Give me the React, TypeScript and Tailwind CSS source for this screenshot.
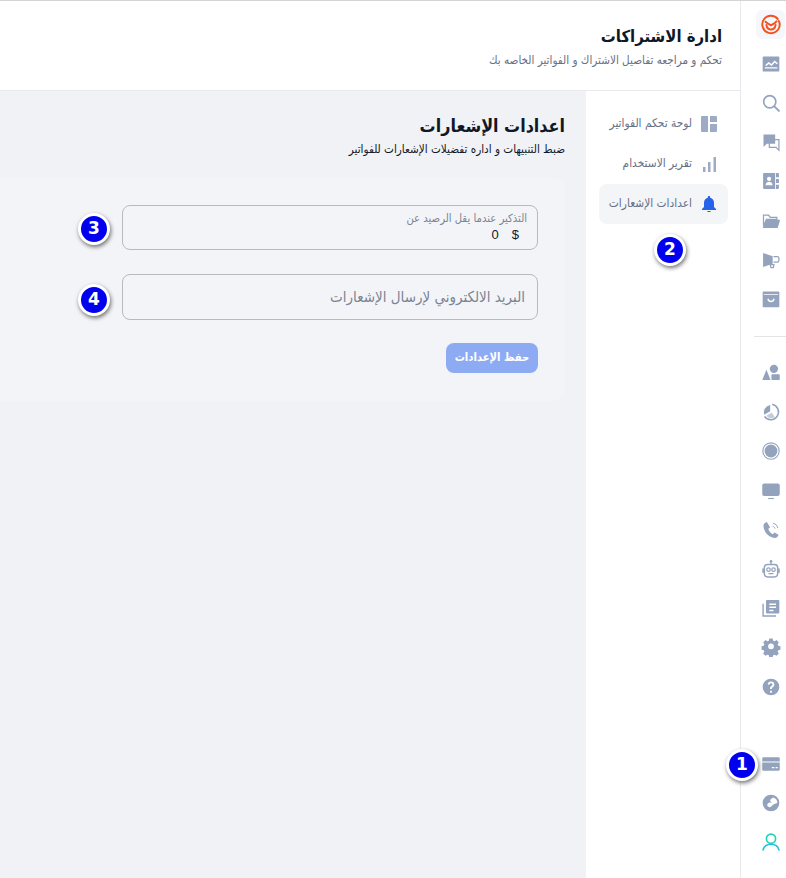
import type { ReactNode } from 'react';

const FONT = "font-['DejaVu_Sans_Condensed','DejaVu_Sans',sans-serif]";

function Svg({ children, className = 'text-[#94a3bd]' }: { children: ReactNode; className?: string }) {
  return (
    <svg viewBox="0 0 24 24" width="20" height="20" fill="currentColor" className={className}>
      {children}
    </svg>
  );
}

const topIcons: ReactNode[] = [
  <Svg>
    <path fillRule="evenodd" d="M3 3h18a1 1 0 0 1 1 1v16a1 1 0 0 1-1 1H3a1 1 0 0 1-1-1V4a1 1 0 0 1 1-1Zm1.500 13v1.500h15V16H4.500Zm.4-2.500 4.300-4 3.300 2.500 3.800-4.300 3.900 3.300-1.200 1.400-2.500-2.100-3.700 4.200-3.500-2.600-2.800 2.600Z" />
  </Svg>,
  <Svg>
    <circle cx="10.500" cy="10.500" r="7.300" fill="none" stroke="currentColor" strokeWidth="2" />
    <path d="m16 16 5.500 5.500" stroke="currentColor" strokeWidth="2.400" strokeLinecap="round" />
  </Svg>,
  <Svg>
    <path d="M10 9h11.500v13l-3.500-3.500h-8Z" fill="none" stroke="currentColor" strokeWidth="1.500" />
    <path d="M3 3h14v11H7l-4 4Z" />
  </Svg>,
  <Svg>
    <path fillRule="evenodd" d="M3.500 2.500H17v19H3.500A1 1 0 0 1 2.500 20.500V3.500a1 1 0 0 1 1-1ZM9.700 7a2.500 2.500 0 1 0 0 5 2.500 2.500 0 0 0 0-5Zm-4.200 10h8.400c0-2.200-1.900-4-4.200-4s-4.200 1.800-4.200 4Z" />
    <path d="M18 2.500h2.500a1 1 0 0 1 1 1v4H18Zm0 7h3.500v5H18Zm0 7h3.500v4a1 1 0 0 1-1 1H18Z" />
  </Svg>,
  <Svg>
    <path d="M3 5h6l2 2.500h8V10H6.500L3 18Z" fill="none" stroke="currentColor" strokeWidth="1.500" />
    <path d="M6.500 10.500H23L20 20.500H2Z" />
  </Svg>,
  <Svg>
    <path d="M2.500 3.500 14 7.500v9l-11.500 4Z" />
    <path d="M15 8h4.500a2 2 0 0 1 2 2v2.500a2 2 0 0 1-2 2H15" fill="none" stroke="currentColor" strokeWidth="1.500" />
    <path d="M11 17.500h4.500l-.7 3.500H12Z" fill="none" stroke="currentColor" strokeWidth="1.500" />
  </Svg>,
  <Svg>
    <path fillRule="evenodd" d="M3 3h18a1 1 0 0 1 1 1v17a1 1 0 0 1-1 1H3a1 1 0 0 1-1-1V4a1 1 0 0 1 1-1Zm.500 3v1h17V6ZM7.500 12c.6 2.500 2.300 4 4.500 4s3.900-1.500 4.500-4l-1.700-.5c-.4 1.700-1.400 2.700-2.800 2.700s-2.400-1-2.800-2.700Z" />
  </Svg>,
];

const midIcons: ReactNode[] = [
  <Svg>
    <path d="m6.500 8 5 12.500H1.500Z" />
    <circle cx="15.500" cy="7" r="5" />
    <rect x="12.500" y="13.500" width="10" height="7" rx="1" />
  </Svg>,
  <Svg>
    <path d="M13.500 2.800a9.300 9.300 0 1 1-9.300 14.700" fill="none" stroke="currentColor" strokeWidth="1.900" />
    <path d="M11 3.500V11l-7 4.200A8.800 8.800 0 0 1 11 3.500Z" />
    <path d="m13 12.500-6.500 4a7.500 7.500 0 0 0 10 1.800Z" opacity="0.55" />
  </Svg>,
  <Svg>
    <circle cx="12" cy="12" r="9.800" fill="none" stroke="currentColor" strokeWidth="1.300" />
    <circle cx="12" cy="12" r="7.700" />
  </Svg>,
  <Svg>
    <rect x="1.500" y="3" width="21" height="15" rx="2.500" />
    <path d="M8.500 21h7" stroke="currentColor" strokeWidth="1.300" />
  </Svg>,
  <Svg>
    <path d="M7 2.500c-1.800.6-4 1.800-4 4.500 0 7 6.500 14.500 13.500 14.500 2.500 0 4-2 4.500-3.800l-4.700-2.700-2.300 2c-2.500-1.300-4.400-3.700-5.300-6.300l2.200-2Z" />
    <path d="M14 7.500c1.500.3 2.500 1.300 2.800 2.800M14.500 4c3 .4 5.200 2.600 5.700 5.700" fill="none" stroke="currentColor" strokeWidth="1.200" />
  </Svg>,
  <Svg>
    <circle cx="12" cy="2.800" r="1.600" />
    <path d="M12 3.500v3" stroke="currentColor" strokeWidth="1.500" />
    <rect x="4" y="6.500" width="16" height="15" rx="4" fill="none" stroke="currentColor" strokeWidth="1.800" />
    <rect x="1.500" y="11" width="2" height="6" rx="1" />
    <rect x="20.500" y="11" width="2" height="6" rx="1" />
    <circle cx="9" cy="12.800" r="2.100" fill="none" stroke="currentColor" strokeWidth="1.500" />
    <circle cx="15" cy="12.800" r="2.100" fill="none" stroke="currentColor" strokeWidth="1.500" />
    <path d="M9.500 17.500h5" stroke="currentColor" strokeWidth="1.500" strokeLinecap="round" />
  </Svg>,
  <Svg>
    <path d="M2.500 7v14.500H18" fill="none" stroke="currentColor" strokeWidth="1.700" />
    <path fillRule="evenodd" d="M7 2.500h14a1 1 0 0 1 1 1v14a1 1 0 0 1-1 1H7a1 1 0 0 1-1-1v-14a1 1 0 0 1 1-1Zm3 4v1.800h8V6.500Zm0 3.800v1.800h8v-1.800Zm0 3.800v1.800h5v-1.800Z" />
  </Svg>,
  <Svg>
    <path fillRule="evenodd" d="m10 2.500h4l.6 2.700 1.700.7 2.400-1.400 2.700 2.800-1.400 2.300.7 1.800 2.600.6v4l-2.600.6-.7 1.700 1.400 2.400-2.700 2.700-2.400-1.400-1.700.7-.6 2.600h-4l-.6-2.600-1.700-.7-2.400 1.400-2.700-2.700 1.400-2.400-.7-1.700-2.600-.6v-4l2.600-.6.7-1.800-1.400-2.300 2.700-2.800 2.400 1.400 1.700-.7ZM12 8.500a3.500 3.500 0 1 0 0 7 3.500 3.500 0 0 0 0-7Z" transform="translate(0 -.8)" />
  </Svg>,
  <Svg>
    <path fillRule="evenodd" d="M12 2a10 10 0 1 1 0 20 10 10 0 0 1 0-20Zm-1.100 14.500v2.300h2.200v-2.300Zm1.100-11c-2.200 0-3.800 1.300-4 3.400l2.100.3c.1-1 .8-1.700 1.900-1.700s1.800.6 1.800 1.500c0 .8-.5 1.200-1.300 1.800-1.100.8-1.700 1.600-1.700 3.100v.6h2.100v-.4c0-.9.400-1.300 1.200-1.900 1.100-.8 1.900-1.700 1.900-3.300 0-2.200-1.800-3.700-4-3.400Z" />
  </Svg>,
];

const bottomIcons: ReactNode[] = [
  <Svg>
    <path fillRule="evenodd" d="M2.500 4h19a1 1 0 0 1 1 1v14a1 1 0 0 1-1 1h-19a1 1 0 0 1-1-1V5a1 1 0 0 1 1-1Zm-1 5v1.200h21V9ZM13 15.500v1.500h3v-1.500Zm4.500 0v1.500H20v-1.500Z" />
  </Svg>,
  <Svg>
    <path fillRule="evenodd" d="M12 2a10 10 0 1 1 0 20 10 10 0 0 1 0-20Zm3 3.500c-1.500 1-4 1.500-4 3.500 0 1.500 1.500 2 2.500 2.500-2.500-.5-5.500 0-6 2.500-.3 1.500 1 2.500 2.500 3 2 0 3-1 4-2.500 1-1.300 3-1.500 5.500-2.500.5-2.700-1.500-5.500-4.500-6.500Z" />
  </Svg>,
  <Svg className="text-[#22d3b4]">
    <circle cx="12" cy="8" r="5.500" fill="none" stroke="currentColor" strokeWidth="2" />
    <path d="M2.500 21.500c1-4 4.500-6.800 9.500-6.800s8.500 2.800 9.500 6.800" fill="none" stroke="#22bfe0" strokeWidth="2" strokeLinecap="round" />
  </Svg>,
];

function RailIcon({ children }: { children: ReactNode }) {
  return <div className="flex h-[39.2px] items-center justify-center">{children}</div>;
}

function Logo() {
  return (
    <div className="flex h-[29px] w-[29px] items-center justify-center rounded-md bg-[#f6f7fa]">
      <svg viewBox="0 0 24 24" width="22" height="22" fill="none" stroke="#f4511e" strokeWidth="2.100" strokeLinecap="round">
        <path d="M19.500 5.500A9.500 9.500 0 1 0 21.500 12c0-1.500-.3-3-1-4.300" />
        <path d="M6 8.500c1.500 1.500 3.500 2.500 6 3.800 2.500-1.300 4.500-2.300 6-4.300" />
        <path d="M7 12c.5 3 2.500 5 5 5s4.500-2 5-5" />
      </svg>
    </div>
  );
}

function Badge({ n, className }: { n: number; className: string }) {
  return (
    <div
      className={`absolute flex h-[32px] w-[32px] items-center justify-center rounded-full border-[3.500px] border-white bg-[#0000ee] font-['DejaVu_Sans',sans-serif] text-[17px] font-bold text-white shadow-[1px_2px_4px_rgba(0,0,0,0.55)] ${className}`}
    >
      {n}
    </div>
  );
}

function MenuItem({ label, icon, active }: { label: string; icon: ReactNode; active?: boolean }) {
  return (
    <div
      className={`flex h-[40px] items-center gap-[9px] rounded-lg pr-[11px] text-[11.800px] text-[#667085] ${active ? 'bg-[#f4f5f7]' : ''}`}
    >
      {icon}
      <span>{label}</span>
    </div>
  );
}

export default function App() {
  return (
    <div dir="rtl" className={`relative flex h-screen overflow-hidden border-t border-[#d4d4d4] bg-white ${FONT}`}>
      {/* icon rail */}
      <aside className="flex w-[46px] shrink-0 flex-col items-stretch border-l border-[#e8e9ec] pt-[4px]">
        <div className="pl-[14px]">
          <RailIcon>
            <Logo />
          </RailIcon>
          {topIcons.map((icon, i) => (
            <RailIcon key={i}>{icon}</RailIcon>
          ))}
        </div>
        <div className="my-[17px] ml-[13px] border-t border-[#e3e5e9]" />
        <div className="pl-[14px]">
          {midIcons.map((icon, i) => (
            <RailIcon key={i}>{icon}</RailIcon>
          ))}
        </div>
        <div className="mt-auto pb-[16px] pl-[14px]">
          {bottomIcons.map((icon, i) => (
            <RailIcon key={i}>{icon}</RailIcon>
          ))}
        </div>
      </aside>

      <main className="flex min-w-0 flex-1 flex-col">
        <header className="h-[90px] shrink-0 border-b border-[#e8e9ec] pt-[22px] pr-[18px]">
          <h1 className="text-[16.600px] leading-[28px] font-bold text-[#101828]">ادارة الاشتراكات</h1>
          <p className="text-[11.600px] leading-[18px] text-[#667085]">
            تحكم و مراجعه تفاصيل الاشتراك و الفواتير الخاصه بك
          </p>
        </header>

        <div className="flex flex-1">
          <nav className="flex w-[154px] shrink-0 flex-col pt-[13px] pr-[12px] pl-[13px]">
            <MenuItem
              label="لوحة تحكم الفواتير"
              icon={
                <svg viewBox="0 0 16 16" width="16" height="16" fill="#9dabc4" className="shrink-0">
                  <path d="M0 1a1 1 0 0 1 1-1h6v16H1a1 1 0 0 1-1-1ZM9 0h6a1 1 0 0 1 1 1v5H9Zm0 8h7v7a1 1 0 0 1-1 1H9Z" />
                </svg>
              }
            />
            <MenuItem
              label="تقرير الاستخدام"
              icon={
                <svg viewBox="0 0 16 16" width="16" height="16" fill="#9dabc4" className="shrink-0">
                  <path d="M2 11h2.500v5H2Zm5-5h2.500v10H7Zm5.500-5H15v15h-2.500Z" />
                </svg>
              }
            />
            <MenuItem
              active
              label="اعدادات الإشعارات"
              icon={
                <svg viewBox="0 0 16 16" width="16" height="16" fill="#2563eb" className="shrink-0">
                  <path d="M8 0c.7 0 1.200.5 1.200 1.200v.5C11.500 2.300 13 4.300 13 6.700V11l2 2v1H1v-1l2-2V6.700c0-2.400 1.500-4.400 3.800-5v-.5C6.800.5 7.300 0 8 0ZM6 15h4c0 .600-.9 1-2 1s-2-.4-2-1Z" />
                </svg>
              }
            />
          </nav>

          <section className="min-w-0 flex-1 bg-[#f1f2f5] pt-[23px] pr-[21px]">
            <h2 className="text-[17.800px] leading-[24px] font-bold text-[#101828]">اعدادات الإشعارات</h2>
            <p className="mt-[2px] mb-[20px] text-[11.600px] leading-[18px] text-[#101828]">
              ضبط التنبيهات و اداره تفضيلات الإشعارات للفواتير
            </p>
            <div className="ml-[-40px] flex h-[223px] flex-col rounded-xl bg-[#f3f4f7] pt-[27px] pr-[27px]">
              <div className="h-[45px] w-[416px] rounded-lg border border-[#b9b9b9] px-[10px] pt-[6px]">
                <div className="text-[11.200px] leading-[14px] text-[#7a8494]">التذكير عندما يقل الرصيد عن</div>
                <div className="mt-[1px] flex gap-[13px] pr-[8px] font-['Liberation_Sans',sans-serif] text-[13px] leading-[16px] text-[#101828]">
                  <span>$</span>
                  <span>0</span>
                </div>
              </div>
              <div className="mt-[24px] flex h-[46px] w-[416px] items-center rounded-lg border border-[#b9b9b9] px-[12px] text-[15px] text-[#7a8494]">
                البريد الالكتروني لإرسال الإشعارات
              </div>
              <button className="mt-[23px] h-[30px] w-[92px] rounded-lg bg-[#8dabf2] text-[11.200px] font-bold text-white">
                حفظ الإعدادات
              </button>
            </div>
          </section>
        </div>
      </main>

      <Badge n={1} className="left-[726px] top-[748px]" />
      <Badge n={2} className="left-[654px] top-[233px]" />
      <Badge n={3} className="left-[78px] top-[212px]" />
      <Badge n={4} className="left-[78px] top-[283px]" />
    </div>
  );
}
